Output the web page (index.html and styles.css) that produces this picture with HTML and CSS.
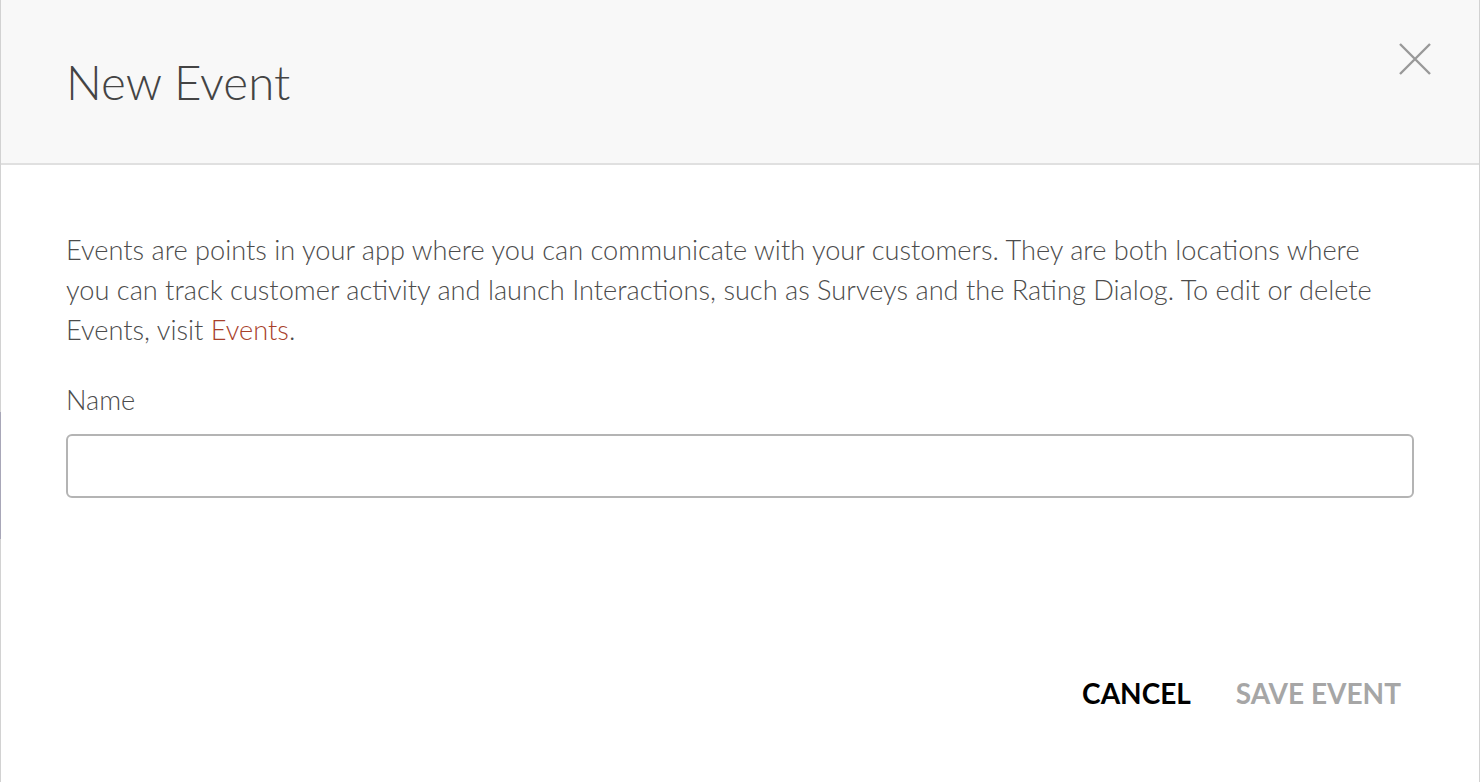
FILE: index.html
```html
<!DOCTYPE html>
<html lang="en">
<head>
<meta charset="utf-8">
<title>New Event</title>
<link rel="stylesheet" href="styles.css">
</head>
<body>
<div class="modal">
  <header class="modal-header">
    <h1 class="modal-title">New Event</h1>
    <button class="close" aria-label="Close">
      <svg width="32" height="32" viewBox="0 0 32 32"><path d="M1 1L31 31M31 1L1 31" stroke="#999" stroke-width="2.4" fill="none"/></svg>
    </button>
  </header>
  <div class="modal-body">
    <p class="intro">Events are points in your app where you can communicate with your customers. They are both locations where you can track customer activity and launch Interactions, such as Surveys and the Rating Dialog. To edit or delete Events, visit <a href="#" class="link">Events</a>.</p>
    <label class="field-label" for="name">Name</label>
    <input id="name" class="field-input" type="text">
  </div>
  <footer class="modal-footer">
    <button class="btn btn-cancel">CANCEL</button>
    <button class="btn btn-save">SAVE EVENT</button>
  </footer>
  <span class="edge-mark"></span>
</div>
</body>
</html>
```

FILE: styles.css
```css
* { box-sizing: border-box; }
html, body { margin: 0; padding: 0; background: #fff; }
body { font-family: Lato, "Open Sans", sans-serif; }

.modal {
  position: relative;
  width: 1480px;
  height: 782px;
  border-left: 1px solid #d2d2d2;
  border-right: 1px solid #d2d2d2;
  display: flex;
  flex-direction: column;
  background: #fff;
}

.modal-header {
  height: 165px;
  flex: none;
  background: #f8f8f8;
  border-bottom: 2px solid #e0e0e0;
  display: flex;
  align-items: flex-start;
  justify-content: space-between;
  padding: 0 48px 0 65px;
}

.modal-title {
  margin: 0;
  padding-top: 54px;
  font-size: 47.5px;
  line-height: 56px;
  font-weight: 300;
  color: #444;
}

.close {
  margin-top: 43px;
  background: none;
  border: none;
  padding: 0;
  width: 32px;
  height: 32px;
  cursor: pointer;
}
.close svg { display: block; }

.modal-body {
  padding: 65px 65px 0 65px;
  display: flex;
  flex-direction: column;
}

.intro {
  margin: 0;
  max-width: 1320px;
  font-size: 27.2px;
  line-height: 40px;
  font-weight: 300;
  color: #4c4c4c;
}

.link {
  color: #a8412b;
  text-decoration: none;
}

.field-label {
  margin-top: 30px;
  font-size: 27.2px;
  line-height: 40px;
  font-weight: 300;
  color: #4c4c4c;
}

.field-input {
  margin-top: 14px;
  height: 64px;
  width: 100%;
  border: 2px solid #b4b4b4;
  border-radius: 6px;
  font-family: inherit;
  font-size: 24px;
  padding: 0 16px;
  outline: none;
}

.modal-footer {
  display: flex;
  justify-content: flex-end;
  gap: 45px;
  padding: 177px 78px 0 0;
}

.btn {
  background: none;
  border: none;
  padding: 0;
  font-family: inherit;
  font-weight: 700;
  font-size: 28px;
  line-height: 36px;
  cursor: pointer;
}
.btn-cancel { color: #000; }
.btn-save { color: #a6a6a6; }

.edge-mark {
  position: absolute;
  left: -1px;
  top: 412px;
  width: 1px;
  height: 127px;
  background: #a8a7b8;
}
```
